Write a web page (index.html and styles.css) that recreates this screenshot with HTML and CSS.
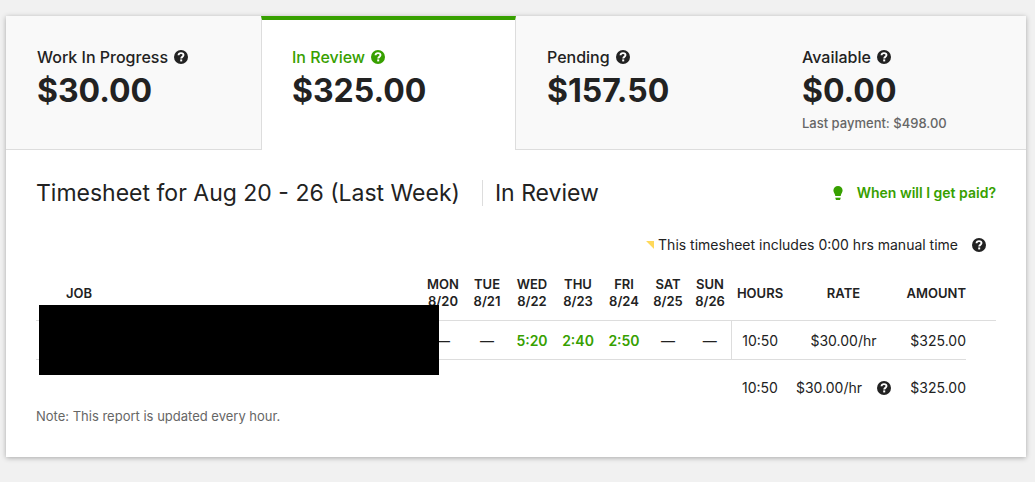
FILE: index.html
```html
<!DOCTYPE html>
<html lang="en">
<head>
  <meta charset="UTF-8">
  <meta name="viewport" content="width=device-width, initial-scale=1.0">
  <title>Reports - In Review</title>
  <link rel="stylesheet" href="styles.css">
</head>
<body>

<!-- shared icon -->
<svg class="sprite" aria-hidden="true">
  <symbol id="help" viewBox="0 0 14 14">
    <circle cx="7" cy="7" r="7" fill="currentColor"/>
    <path d="M4.500 5.300C4.600 3.800 5.600 3.100 7 3.100c1.500 0 2.500.8 2.500 2 0 1.800-2.300 1.700-2.300 3.400" fill="none" stroke="#fff" stroke-width="1.900"/>
    <rect x="6.200" y="9.400" width="2" height="2" fill="#fff"/>
  </symbol>
</svg>

<main class="card">
  <div class="tabs" role="tablist">
    <button class="tab" role="tab">
      <span class="tab-label">Work In Progress <svg class="help"><use href="#help"/></svg></span>
      <span class="tab-amount">$30.00</span>
    </button>
    <button class="tab active" role="tab" aria-selected="true">
      <span class="tab-label">In Review <svg class="help"><use href="#help"/></svg></span>
      <span class="tab-amount">$325.00</span>
    </button>
    <button class="tab" role="tab">
      <span class="tab-label">Pending <svg class="help"><use href="#help"/></svg></span>
      <span class="tab-amount">$157.50</span>
    </button>
    <button class="tab" role="tab">
      <span class="tab-label">Available <svg class="help"><use href="#help"/></svg></span>
      <span class="tab-amount">$0.00</span>
      <span class="tab-note">Last payment: $498.00</span>
    </button>
  </div>

  <section class="content">
    <header class="title-row">
      <h1>Timesheet for Aug 20 - 26 (Last Week)</h1>
      <span class="status">In Review</span>
      <a class="paid-link" href="#">
        <svg class="bulb" viewBox="0 0 10 14" aria-hidden="true">
          <path d="M5 0a4.600 4.600 0 0 0-4.600 4.600c0 1.900 1.500 2.900 1.900 5.500h5.400c.4-2.600 1.900-3.600 1.900-5.500A4.600 4.600 0 0 0 5 0z" fill="currentColor"/>
          <path d="M2.300 11h5.400v1H2.300z" fill="currentColor" opacity=".3"/>
          <path d="M2.300 12h5.400l-.7 2H3z" fill="currentColor"/>
        </svg>
        When will I get paid?
      </a>
    </header>

    <p class="manual">
      <span class="corner"></span>
      This timesheet includes 0:00 hrs manual time
      <button class="help-btn" aria-label="About manual time"><svg class="help"><use href="#help"/></svg></button>
    </p>

    <div class="sheet">
      <table>
        <colgroup>
          <col>
          <col class="col-day">
          <col class="col-day">
          <col class="col-day-wide">
          <col class="col-day-wide">
          <col class="col-day-wide">
          <col class="col-weekend">
          <col class="col-weekend">
          <col class="col-hours">
          <col class="col-rate">
          <col class="col-amount">
          <col class="col-end">
        </colgroup>
        <thead>
          <tr>
            <th class="job">JOB</th>
            <th>MON<br>8/20</th>
            <th>TUE<br>8/21</th>
            <th>WED<br>8/22</th>
            <th>THU<br>8/23</th>
            <th>FRI<br>8/24</th>
            <th>SAT<br>8/25</th>
            <th>SUN<br>8/26</th>
            <th>HOURS</th>
            <th>RATE</th>
            <th class="amount">AMOUNT</th>
            <th></th>
          </tr>
        </thead>
        <tbody>
          <tr>
            <td></td>
            <td>—</td>
            <td>—</td>
            <td><a href="#">5:20</a></td>
            <td><a href="#">2:40</a></td>
            <td><a href="#">2:50</a></td>
            <td>—</td>
            <td>—</td>
            <td class="hours">10:50</td>
            <td>$30.00/hr</td>
            <td class="amount">$325.00</td>
            <td class="end"></td>
          </tr>
        </tbody>
        <tfoot>
          <tr>
            <td colspan="8"></td>
            <td>10:50</td>
            <td>
              <div class="total-rate">
                $30.00/hr
                <button class="help-btn" aria-label="About the rate"><svg class="help"><use href="#help"/></svg></button>
              </div>
            </td>
            <td class="amount">$325.00</td>
            <td></td>
          </tr>
        </tfoot>
      </table>
      <div class="redacted"></div>
    </div>

    <p class="note">Note: This report is updated every hour.</p>
  </section>
</main>

</body>
</html>
```
FILE: styles.css
```css
* { box-sizing: border-box; }

body {
  margin: 0;
  padding: 16px 9px 25px 6px;
  background: #f1f1f1;
  color: #222;
  font-family: Inter, "Liberation Sans", sans-serif;
  font-size: 14px;
}

button {
  border: none;
  background: none;
  color: inherit;
  font: inherit;
  cursor: pointer;
}

a {
  color: #37a000;
  font-weight: 600;
  text-decoration: none;
}

.sprite {
  position: absolute;
  width: 0;
  height: 0;
}

.help {
  display: block;
  width: 14px;
  height: 14px;
}

.help-btn {
  padding: 0;
}

.card {
  background: #fff;
  box-shadow: 0 1px 5px rgba(0, 0, 0, 0.3);
}

/* Tabs */
.tabs {
  display: grid;
  grid-template-columns: repeat(4, 1fr);
}

.tab {
  display: flex;
  flex-direction: column;
  align-items: flex-start;
  height: 134px;
  padding: 31px 31px 0;
  border-bottom: 1px solid #ddd;
  background: #f9f9f9;
  text-align: left;
}

.tab.active {
  padding: 27px 30px 0;
  border: 1px solid #ddd;
  border-top: 4px solid #37a000;
  border-bottom: none;
  background: #fff;
}

.tab-label {
  display: flex;
  align-items: center;
  gap: 6px;
  font-size: 16px;
  font-weight: 500;
  line-height: 20px;
}

.active .tab-label {
  color: #37a000;
}

.tab-amount {
  font-size: 32px;
  font-weight: 700;
  line-height: 48px;
}

.tab-note {
  color: #666;
  font-size: 13px;
  font-weight: 500;
  line-height: 16px;
}

/* Timesheet */
.content {
  padding: 30px;
}

.title-row {
  display: flex;
  align-items: center;
  line-height: 26px;
}

h1,
.status {
  margin: 0;
  font-size: 23px;
  font-weight: 400;
}

.status {
  margin-left: 22px;
  padding-left: 12px;
  border-left: 1px solid #ddd;
}

.paid-link {
  display: flex;
  align-items: center;
  gap: 14px;
  margin-left: auto;
}

.bulb {
  width: 10px;
  height: 14px;
}

.manual {
  display: flex;
  justify-content: flex-end;
  align-items: center;
  margin: 28px 10px 20px;
  line-height: 22px;
}

.manual .help-btn {
  margin-left: 14px;
}

.corner {
  width: 8px;
  height: 8px;
  margin-right: 4px;
  background: #ffd95a;
  clip-path: polygon(0 0, 100% 0, 100% 100%);
}

.sheet {
  position: relative;
}

table {
  width: 100%;
  table-layout: fixed;
  border-collapse: collapse;
  text-align: center;
}

.col-day { width: 44px; }
.col-day-wide { width: 46px; }
.col-weekend { width: 42px; }
.col-hours { width: 58px; }
.col-rate { width: 109px; }
.col-amount { width: 68px; }
.col-end { width: 30px; }

th,
td {
  padding: 0;
}

th {
  padding-bottom: 10px;
  border-bottom: 1px solid #ddd;
  font-size: 13px;
  font-weight: 600;
  line-height: 17px;
}

th.job {
  padding-left: 30px;
  text-align: left;
}

td {
  height: 39px;
}

tbody td {
  border-bottom: 1px solid #ddd;
}

tbody td.end {
  border-bottom: none;
}

tfoot td {
  height: 46px;
  padding-top: 10px;
}

.hours {
  border-left: 1px solid #ddd;
}

.amount {
  text-align: right;
}

.total-rate {
  display: flex;
  justify-content: center;
  align-items: center;
  gap: 15px;
}

/* Covers the job name */
.redacted {
  position: absolute;
  top: 29px;
  left: 3px;
  width: 400px;
  height: 70px;
  background: #000;
}

.note {
  margin: 0;
  color: #666;
  font-size: 13px;
  line-height: 21px;
}
```
